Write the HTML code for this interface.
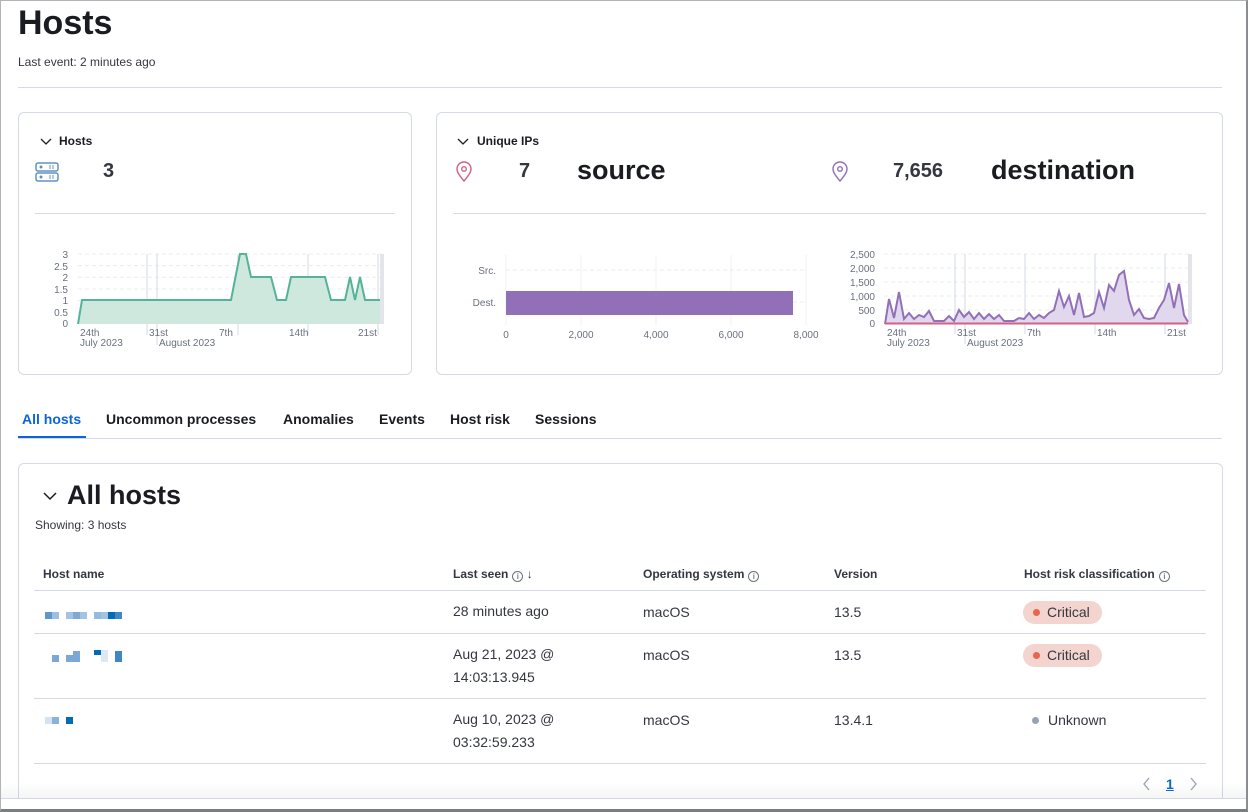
<!DOCTYPE html>
<html style="overflow:hidden;width:1248px;height:812px"><head><meta charset="utf-8"><style>
*{box-sizing:border-box;margin:0;padding:0}
body{width:1248px;height:812px;background:#fff;font-family:"Liberation Sans",sans-serif;color:#1a1c21;position:relative;overflow:hidden}
.abs{position:absolute}
.panel{position:absolute;border:1px solid #d3dae6;border-radius:6px;background:#fff}
.tab{position:absolute;top:411px;font-size:14px;font-weight:bold;color:#1a1c21}
.th{position:absolute;top:567px;font-size:12px;font-weight:bold;color:#343741}
.td{position:absolute;font-size:14px;color:#343741;line-height:23px}
.hr{position:absolute;left:34px;width:1172px;height:1px;background:#d3dae6}
.badge{position:absolute;left:1023px;width:79px;height:23px;border-radius:12px;background:#f3d4cf;font-size:14px;line-height:23px;padding-left:24px;color:#343741}
.badge:before{content:"";position:absolute;left:10px;top:8px;width:7px;height:7px;border-radius:50%;background:#e7664c}
.info{display:inline-block;width:11px;height:11px;border:1px solid #69707d;border-radius:50%;font-size:8px;line-height:9px;text-align:center;vertical-align:-1px;margin-left:4px;font-weight:normal}
.ax{font-size:10px;fill:#69707d;font-family:"Liberation Sans",sans-serif}
</style></head><body>
<div class="abs" style="left:18px;top:4px;font-size:34px;font-weight:bold">Hosts</div>
<div class="abs" style="left:18px;top:55px;font-size:12px;color:#343741">Last event: 2 minutes ago</div>
<div class="abs" style="left:18px;top:87px;width:1204px;height:1px;background:#d3dae6"></div>

<div class="panel" style="left:18px;top:112px;width:394px;height:263px"></div>
<svg class="abs" style="left:40px;top:136px" width="12" height="10"><path d="M1 3l5 5 5-5" fill="none" stroke="#1a1c21" stroke-width="1.3"/></svg>
<div class="abs" style="left:59px;top:134px;font-size:12px;font-weight:bold">Hosts</div>
<svg class="abs" style="left:35px;top:162px" width="24" height="20"><rect x="1" y="1" width="22" height="8" rx="2" fill="none" stroke="#6092c0" stroke-width="1.5"/><rect x="1" y="11" width="22" height="8" rx="2" fill="none" stroke="#6092c0" stroke-width="1.5"/><circle cx="6" cy="5" r="1.5" fill="#6092c0"/><circle cx="6" cy="15" r="1.5" fill="#6092c0"/><path d="M15 3v4M18 3v4M15 13v4M18 13v4" stroke="#6092c0"/></svg>
<div class="abs" style="left:103px;top:160px;font-size:20px;font-weight:bold;color:#343741">3</div>
<div class="abs" style="left:35px;top:213px;width:360px;height:1px;background:#d3dae6"></div>
<svg class="abs" style="left:40px;top:245px" width="360" height="110">
<g stroke="#e9ecf1" stroke-dasharray="4 3"><path d="M38 9H342M38 20.6H342M38 32.3H342M38 44H342M38 55.6H342M38 67.3H342"/></g>
<g stroke="#d3dae6"><path d="M107 9v81M117 9v91M198 9v81M268 9v81M338 9v81"/></g>
<rect x="340" y="9" width="4" height="70" fill="#e3e5ea"/>
<path d="M38 79L42 55L191 55L200 9L206 9L211 32L231 32L237 55L246 55L251 32L285 32L291 55L305 55L310 32L315 55L320 32L325 55L340 55L340 79Z" fill="#cfe8de"/>
<path d="M38 79L42 55L191 55L200 9L206 9L211 32L231 32L237 55L246 55L251 32L285 32L291 55L305 55L310 32L315 55L320 32L325 55L340 55" fill="none" stroke="#54b399" stroke-width="2"/>
<g class="ax" text-anchor="end"><text x="28" y="13">3</text><text x="28" y="25">2.5</text><text x="28" y="36">2</text><text x="28" y="48">1.5</text><text x="28" y="59">1</text><text x="28" y="71">0.5</text><text x="28" y="82">0</text></g>
<g class="ax"><text x="40" y="91">24th</text><text x="109" y="91">31st</text><text x="179" y="91">7th</text><text x="249" y="91">14th</text><text x="318" y="91">21st</text><text x="40" y="101">July 2023</text><text x="119" y="101">August 2023</text></g>
</svg>

<div class="panel" style="left:436px;top:112px;width:787px;height:263px"></div>
<svg class="abs" style="left:457px;top:136px" width="12" height="10"><path d="M1 3l5 5 5-5" fill="none" stroke="#1a1c21" stroke-width="1.3"/></svg>
<div class="abs" style="left:477px;top:134px;font-size:12px;font-weight:bold">Unique IPs</div>
<svg class="abs" style="left:455px;top:161px" width="18" height="22"><path d="M9 20C4 14 2 11 2 8a7 7 0 0114 0c0 3-2 6-7 12z" fill="none" stroke="#d36086" stroke-width="1.4"/><circle cx="9" cy="8" r="2.3" fill="none" stroke="#d36086" stroke-width="1.4"/></svg>
<div class="abs" style="left:519px;top:160px;font-size:20px;font-weight:bold;color:#343741">7</div>
<div class="abs" style="left:577px;top:155px;font-size:27px;font-weight:bold">source</div>
<svg class="abs" style="left:831px;top:161px" width="18" height="22"><path d="M9 20C4 14 2 11 2 8a7 7 0 0114 0c0 3-2 6-7 12z" fill="none" stroke="#9170b8" stroke-width="1.4"/><circle cx="9" cy="8" r="2.3" fill="none" stroke="#9170b8" stroke-width="1.4"/></svg>
<div class="abs" style="left:893px;top:160px;font-size:20px;font-weight:bold;color:#343741">7,656</div>
<div class="abs" style="left:991px;top:155px;font-size:27px;font-weight:bold">destination</div>
<div class="abs" style="left:453px;top:213px;width:753px;height:1px;background:#d3dae6"></div>
<svg class="abs" style="left:460px;top:250px" width="370" height="100">
<g stroke="#e9ecf1" stroke-dasharray="4 3"><path d="M46 20H346M46 52H346"/></g>
<g stroke="#eef0f3"><path d="M46 5V75M121 5V75M196 5V75M271 5V75M346 5V75"/></g>
<rect x="46" y="41" width="287" height="24" fill="#9170b8"/>
<g class="ax" text-anchor="end"><text x="36" y="24">Src.</text><text x="36" y="56">Dest.</text></g>
<g class="ax" text-anchor="middle"><text x="46" y="88">0</text><text x="121" y="88">2,000</text><text x="196" y="88">4,000</text><text x="271" y="88">6,000</text><text x="346" y="88">8,000</text></g>
</svg>
<svg class="abs" style="left:830px;top:245px" width="380" height="110">
<g stroke="#e9ecf1" stroke-dasharray="4 3"><path d="M54 9H360M54 23H360M54 37H360M54 51H360M54 65H360"/></g>
<g stroke="#d3dae6"><path d="M125 9v80M135 9v90M195 9v80M265 9v80M335 9v80"/></g>
<rect x="358" y="9" width="4" height="70" fill="#e3e5ea"/>
<path d="M55 79L59 54L64 73L69 47L74 74L79 68L84 74L89 70L94 72L99 66L104 76L109 76L114 76L119 71L124 76L129 65L134 72L139 67L144 74L149 68L154 74L159 69L164 74L169 70L174 76L179 76L184 76L189 73L194 74L199 68L204 74L209 70L214 73L219 68L224 65L229 46L234 62L239 51L244 70L249 48L254 72L259 71L264 68L269 47L274 63L279 40L284 46L289 30L294 26L299 55L304 70L309 64L314 73L319 74L324 73L329 63L334 55L339 38L344 63L349 39L354 70L358 77L358 79Z" fill="#e2d8ed"/>
<path d="M55 79L59 54L64 73L69 47L74 74L79 68L84 74L89 70L94 72L99 66L104 76L109 76L114 76L119 71L124 76L129 65L134 72L139 67L144 74L149 68L154 74L159 69L164 74L169 70L174 76L179 76L184 76L189 73L194 74L199 68L204 74L209 70L214 73L219 68L224 65L229 46L234 62L239 51L244 70L249 48L254 72L259 71L264 68L269 47L274 63L279 40L284 46L289 30L294 26L299 55L304 70L309 64L314 73L319 74L324 73L329 63L334 55L339 38L344 63L349 39L354 70L358 77" fill="none" stroke="#9170b8" stroke-width="2"/>
<path d="M55 78.5H358" stroke="#d36086" stroke-width="2"/>
<g class="ax" text-anchor="end"><text x="45" y="13">2,500</text><text x="45" y="27">2,000</text><text x="45" y="41">1,500</text><text x="45" y="55">1,000</text><text x="45" y="69">500</text><text x="45" y="82">0</text></g>
<g class="ax"><text x="57" y="91">24th</text><text x="127" y="91">31st</text><text x="197" y="91">7th</text><text x="267" y="91">14th</text><text x="337" y="91">21st</text><text x="57" y="101">July 2023</text><text x="137" y="101">August 2023</text></g>
</svg>

<div class="tab" style="left:22px;color:#0b64dd">All hosts</div>
<div class="abs" style="left:18px;top:436px;width:68px;height:2px;background:#0b64dd"></div>
<div class="tab" style="left:106px">Uncommon processes</div>
<div class="tab" style="left:283px">Anomalies</div>
<div class="tab" style="left:379px">Events</div>
<div class="tab" style="left:450px">Host risk</div>
<div class="tab" style="left:535px">Sessions</div>
<div class="abs" style="left:18px;top:438px;width:1204px;height:1px;background:#d3dae6"></div>

<div class="panel" style="left:18px;top:463px;width:1205px;height:345px"></div>
<svg class="abs" style="left:42px;top:490px" width="16" height="12"><path d="M2 3l6 6 6-6" fill="none" stroke="#1a1c21" stroke-width="1.5"/></svg>
<div class="abs" style="left:67px;top:480px;font-size:27px;font-weight:bold">All hosts</div>
<div class="abs" style="left:35px;top:518px;font-size:12px;color:#343741">Showing: 3 hosts</div>
<div class="th" style="left:43px">Host name</div>
<div class="th" style="left:453px">Last seen<span class="info">i</span> <span style="font-weight:normal">↓</span></div>
<div class="th" style="left:643px">Operating system<span class="info">i</span></div>
<div class="th" style="left:834px">Version</div>
<div class="th" style="left:1024px">Host risk classification<span class="info">i</span></div>
<div class="hr" style="top:590px"></div>
<div class="hr" style="top:633px"></div>
<div class="hr" style="top:698px"></div>
<div class="hr" style="top:763px"></div>

<svg class="abs" style="left:45px;top:606px" width="80" height="70">
<g><rect x="0" y="6" width="7" height="7" fill="#5f97ca"/><rect x="7" y="6" width="7" height="7" fill="#9dbfe0"/><rect x="21" y="6" width="7" height="7" fill="#a3c3e2"/><rect x="28" y="6" width="7" height="7" fill="#80aad6"/><rect x="35" y="6" width="7" height="7" fill="#a3c3e2"/><rect x="49" y="6" width="7" height="7" fill="#96b9dd"/><rect x="56" y="6" width="7" height="7" fill="#a3c3e2"/><rect x="63" y="6" width="7" height="7" fill="#006bb8"/><rect x="70" y="6" width="7" height="7" fill="#3f86c7"/></g>
<g><rect x="7" y="49" width="7" height="7" fill="#7ba8d6"/><rect x="21" y="49" width="7" height="7" fill="#7ba8d6"/><rect x="28" y="45" width="7" height="11" fill="#7ba8d6"/><rect x="49" y="44" width="7" height="5" fill="#006bb8"/><rect x="56" y="44" width="7" height="12" fill="#dde8f3"/><rect x="70" y="45" width="7" height="11" fill="#3f86c7"/></g>
</svg>
<svg class="abs" style="left:45px;top:715px" width="40" height="12"><rect x="0" y="2" width="7" height="7" fill="#d5e2ef"/><rect x="7" y="2" width="7" height="7" fill="#8ab3db"/><rect x="21" y="2" width="7" height="7" fill="#006bb8"/></svg>

<div class="td" style="left:453px;top:600px">28 minutes ago</div>
<div class="td" style="left:643px;top:601px">macOS</div>
<div class="td" style="left:834px;top:601px">13.5</div>
<div class="badge" style="top:601px">Critical</div>

<div class="td" style="left:453px;top:643px">Aug 21, 2023 @<br>14:03:13.945</div>
<div class="td" style="left:643px;top:644px">macOS</div>
<div class="td" style="left:834px;top:644px">13.5</div>
<div class="badge" style="top:644px">Critical</div>

<div class="td" style="left:453px;top:708px">Aug 10, 2023 @<br>03:32:59.233</div>
<div class="td" style="left:643px;top:709px">macOS</div>
<div class="td" style="left:834px;top:709px">13.4.1</div>
<div class="td" style="left:1048px;top:709px">Unknown</div>
<div class="abs" style="left:1032px;top:717px;width:7px;height:7px;border-radius:50%;background:#98a2b3"></div>

<svg class="abs" style="left:1142px;top:777px" width="10" height="14"><path d="M7 1L2 7l5 6" fill="none" stroke="#98a2b3" stroke-width="1.3"/></svg>
<div class="abs" style="left:1166px;top:776px;font-size:14px;font-weight:bold;color:#0b64dd;text-decoration:underline">1</div>
<svg class="abs" style="left:1189px;top:777px" width="10" height="14"><path d="M2 1l5 6-5 6" fill="none" stroke="#98a2b3" stroke-width="1.3"/></svg>
<div class="abs" style="left:0;top:782px;width:1248px;height:16px;background:linear-gradient(rgba(0,0,0,0),rgba(0,0,0,0.04))"></div>
<div class="abs" style="left:0;top:798px;width:1248px;height:14px;background:#fff;border-top:1px solid #d3dae6"></div>
<div class="abs" style="left:0;top:0;width:1248px;height:812px;border:1px solid #b0b3b8;border-right:2px solid #8a8d92;border-bottom:3px solid #7a7d82"></div>
</body></html>
